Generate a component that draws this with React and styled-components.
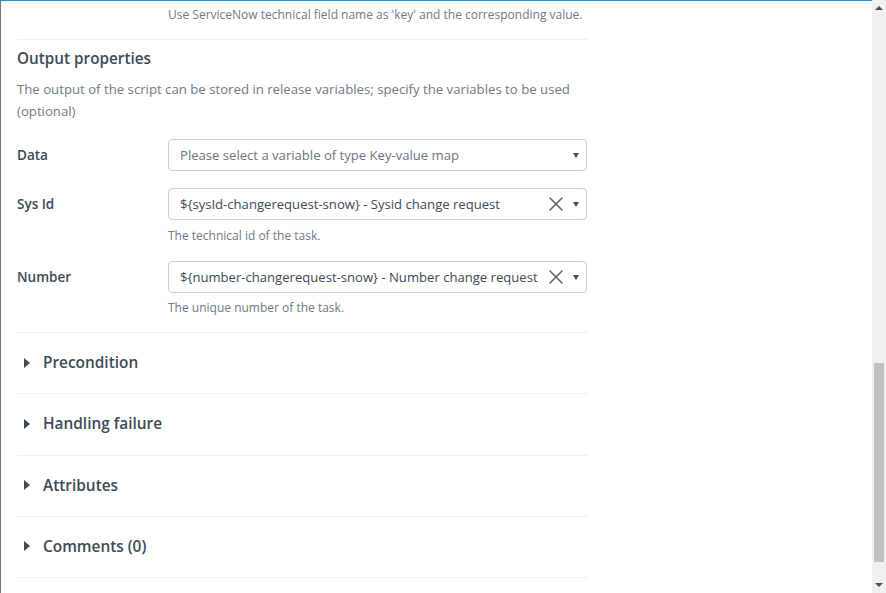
import React from "react";
import styled, { createGlobalStyle } from "styled-components";

const Global = createGlobalStyle`
  html, body { margin: 0; padding: 0; background: #fff; }
  body { font-family: "Open Sans", "Noto Sans", sans-serif; overflow: hidden; }
  * { box-sizing: border-box; }
`;

const Frame = styled.div`
  display: flex;
  width: 886px;
  height: 593px;
  border-left: 1px solid #6f7a84;
  overflow: hidden;
`;

const Main = styled.div`
  flex: 1;
  border-top: 1px solid #0a9be0;
  padding: 5px 0 0 16px;
  overflow: hidden;
`;

const Content = styled.div`
  width: 570px;
`;

const Help = styled.div`
  font-size: 12px;
  line-height: 18px;
  color: #707a84;
  padding-left: ${(p) => p.$indent || 0}px;
  margin-top: ${(p) => p.$mt || 0}px;
`;

const Divider = styled.div`
  height: 1px;
  background: #eeeeee;
  margin-top: ${(p) => p.$mt || 0}px;
`;

const Heading = styled.h3`
  margin: 7px 0 0;
  font-size: 15.3px;
  line-height: 22px;
  font-weight: 600;
  color: #3d4a57;
`;

const Desc = styled.p`
  margin: 9px 0 0;
  font-size: 13.2px;
  line-height: 22px;
  color: #707a84;
`;

const FormRow = styled.div`
  display: grid;
  grid-template-columns: 151px 419px;
  margin-top: ${(p) => p.$mt}px;
`;

const Label = styled.div`
  font-size: 13.5px;
  font-weight: 600;
  color: #3d4a57;
  height: 32px;
  display: flex;
  align-items: center;
`;

const Control = styled.div`
  display: flex;
  flex-direction: column;
`;

const SelectBox = styled.div`
  height: 32px;
  border: 1px solid #c9ced3;
  border-radius: 4px;
  display: flex;
  align-items: center;
  padding: 0 7px 0 11px;
  background: #fff;
`;

const SelectText = styled.span`
  flex: 1;
  font-size: 13.1px;
  color: ${(p) => (p.$placeholder ? "#6b7580" : "#3d4a57")};
  white-space: nowrap;
  overflow: hidden;
`;

const ClearBtn = styled.span`
  display: flex;
  width: 16px;
  height: 16px;
  margin-right: 9px;
  margin-left: 4px;
`;

const Caret = styled.span`
  width: 0;
  height: 0;
  border-left: 3px solid transparent;
  border-right: 3px solid transparent;
  border-top: 5px solid #3d4a57;
`;

const Section = styled.div`
  height: 61.25px;
  border-bottom: 1px solid #eeeeee;
  display: flex;
  align-items: center;
  padding-left: 7px;
  padding-bottom: 1px;
  gap: 13px;
`;

const SectionArrow = styled.span`
  width: 0;
  height: 0;
  border-top: 5px solid transparent;
  border-bottom: 5px solid transparent;
  border-left: 6px solid #3d4a57;
`;

const SectionTitle = styled.span`
  font-size: 15.4px;
  font-weight: 600;
  color: #3d4a57;
`;

const Scrollbar = styled.div`
  width: 14px;
  background: #f0f0f0;
  display: flex;
  flex-direction: column;
  align-items: center;
`;

const ArrowUp = styled.div`
  margin-top: 6px;
  width: 0;
  height: 0;
  border-left: 4px solid transparent;
  border-right: 4px solid transparent;
  border-bottom: 4px solid #505050;
`;

const Track = styled.div`
  flex: 1;
  width: 100%;
  display: flex;
  flex-direction: column;
  justify-content: flex-end;
  align-items: center;
  padding-bottom: 21px;
`;

const Thumb = styled.div`
  width: 10px;
  height: 199px;
  background: #c1c1c1;
`;

const ArrowDown = styled.div`
  margin-bottom: 6px;
  width: 0;
  height: 0;
  border-left: 4px solid transparent;
  border-right: 4px solid transparent;
  border-top: 4px solid #505050;
`;

const XIcon = () => (
  <svg width="16" height="16" viewBox="0 0 16 16">
    <path d="M2 2 L14 14 M14 2 L2 14" stroke="#5d6670" strokeWidth="1.6" strokeLinecap="round" fill="none" />
  </svg>
);

function Select({ value, placeholder, clearable }) {
  return (
    <SelectBox>
      <SelectText $placeholder={placeholder}>{value}</SelectText>
      {clearable && (
        <ClearBtn>
          <XIcon />
        </ClearBtn>
      )}
      <Caret />
    </SelectBox>
  );
}

const sections = ["Precondition", "Handling failure", "Attributes", "Comments (0)"];

export default function App() {
  return (
    <>
      <Global />
      <Frame>
        <Main>
          <Content>
            <Help $indent={151}>
              Use ServiceNow technical field name as 'key' and the corresponding value.
            </Help>
            <Divider $mt={15} />
            <Heading>Output properties</Heading>
            <Desc>
              The output of the script can be stored in release variables; specify the variables to be used (optional)
            </Desc>
            <FormRow $mt={17}>
              <Label>Data</Label>
              <Control>
                <Select placeholder value="Please select a variable of type Key-value map" />
              </Control>
            </FormRow>
            <FormRow $mt={17}>
              <Label>Sys Id</Label>
              <Control>
                <Select clearable value="${sysId-changerequest-snow} - Sysid change request" />
                <Help $mt={7}>The technical id of the task.</Help>
              </Control>
            </FormRow>
            <FormRow $mt={16}>
              <Label>Number</Label>
              <Control>
                <Select clearable value="${number-changerequest-snow} - Number change request" />
                <Help $mt={6}>The unique number of the task.</Help>
              </Control>
            </FormRow>
            <Divider $mt={15} />
            {sections.map((s) => (
              <Section key={s}>
                <SectionArrow />
                <SectionTitle>{s}</SectionTitle>
              </Section>
            ))}
          </Content>
        </Main>
        <Scrollbar>
          <ArrowUp />
          <Track>
            <Thumb />
          </Track>
          <ArrowDown />
        </Scrollbar>
      </Frame>
    </>
  );
}
